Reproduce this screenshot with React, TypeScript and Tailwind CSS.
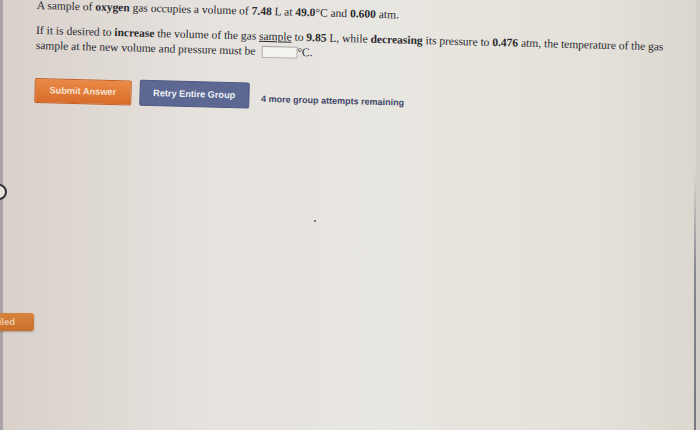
import React from "react";

export default function App() {
  return (
    <div className="relative w-[700px] h-[430px] overflow-hidden bg-[linear-gradient(to_right,#d9d0ca,#e6e3de_30%,#e8e6e0_55%,#e4e1da_85%,#dbd7cf)]">
      {/* left sidebar edge */}
      <div className="absolute left-0 top-0 h-full w-[3px] bg-[#a9a3a5]" />
      <div className="absolute left-[-9px] top-[184px] h-[16px] w-[16px] rounded-full border-2 border-[#2f2f35] bg-[#e4e2de]" />
      <div className="absolute left-[-20px] top-[313px] flex h-[18px] w-[54px] items-center justify-end rounded-[3px] bg-[linear-gradient(#d8843d,#c96f2c)] pr-[19px] shadow-[0_1px_2px_rgba(0,0,0,0.25)]">
        <span className="font-['Liberation_Sans',Arial,sans-serif] text-[9.5px] font-bold text-[#ecc9a6]">iled</span>
      </div>
      {/* right screen edge */}
      <div className="absolute right-[4px] top-[170px] h-[260px] w-[2px] bg-[linear-gradient(rgba(120,120,130,0),#85858f_40%,#77777f)]" />
      <div className="absolute right-0 top-0 h-full w-[4px] bg-[#d3cfc8]" />
      <div className="absolute left-[314px] top-[220px] h-[2px] w-[2px] rounded-full bg-[#55555a]" />

      <div className="origin-top-left rotate-[1.5deg] pl-[37px] pt-0 font-['Liberation_Serif','Times_New_Roman',serif] text-[11.5px] leading-[14px] text-[#2a2a30]">
        <p className="-mt-[3px] whitespace-nowrap">
          A sample of <b>oxygen</b> gas occupies a volume of <b>7.48</b> L at <b>49.0</b>°C and <b>0.600</b> atm.
        </p>
        <p className="mt-[11px] whitespace-nowrap leading-[15px]">
          If it is desired to <b>increase</b> the volume of the gas <span className="underline">sample</span> to <b>9.85</b> L, while <b>decreasing</b> its pressure to <b>0.476</b> atm, the temperature of the gas
          <br />
          sample at the new volume and pressure must be{" "}
          <span className="ml-[3px] inline-block h-[12px] w-[36px] border border-[#a9a9ad] bg-[#f3f2ee] align-[-3px]" />
          °C.
        </p>
        <div className="mt-[24px] flex items-center font-['Liberation_Sans',Arial,sans-serif]">
          <button className="h-[25px] rounded-[2px] border border-[#c65f22] bg-[linear-gradient(#ea8a46,#d96c2a)] px-[14px] text-[9.2px] font-bold text-[#f7e2d0]">
            Submit Answer
          </button>
          <button className="ml-[8px] h-[26px] rounded-[2px] border border-[#4f5882] bg-[#5c6792] px-[13px] text-[9.2px] font-bold text-[#eef0f6]">
            Retry Entire Group
          </button>
          <span className="ml-[12px] mt-[6px] text-[9px] font-bold text-[#40466a]">
            4 more group attempts remaining
          </span>
        </div>
      </div>
    </div>
  );
}
